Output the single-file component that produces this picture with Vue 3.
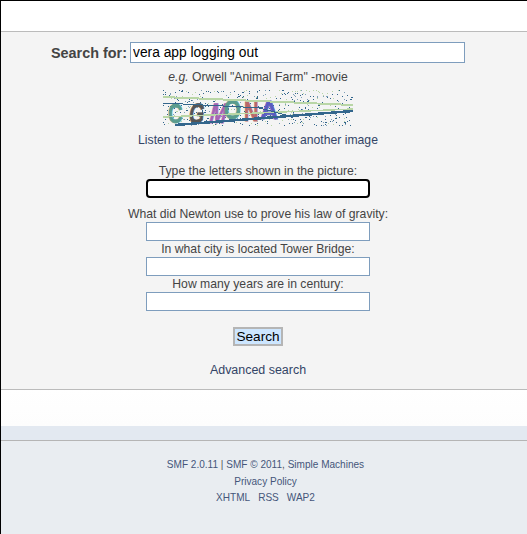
<template>
  <div class="page">
    <div class="top-bar"></div>

    <form class="search-panel" @submit.prevent>
      <div class="search-row">
        <label class="search-label" for="q">Search for:</label>
        <input id="q" v-model="query" class="field search-input" type="text" />
      </div>
      <p class="hint"><em>e.g.</em> Orwell "Animal Farm" -movie</p>

      <svg class="captcha" width="190" height="36" viewBox="0 0 190 36" role="img" aria-label="Visual verification">
        <rect v-for="d in dots" :key="d.id" :x="d.x" :y="d.y" width="1" height="1" :fill="d.fill" />
        <g class="captcha-text">
          <text
            v-for="l in captchaLetters"
            :key="l.id"
            :transform="l.transform"
            :fill="l.fill"
            :stroke="l.fill"
          >{{ l.char }}</text>
        </g>
        <line x1="0" y1="7" x2="190" y2="15" stroke="#b9d6a6" stroke-width="2" />
        <line x1="0" y1="27" x2="190" y2="19" stroke="#b9d6a6" stroke-width="1.5" />
        <line x1="0" y1="13" x2="100" y2="18" stroke="#33668c" stroke-width="1" />
        <line x1="92" y1="17" x2="131" y2="27" stroke="#33668c" stroke-width="1" />
        <line x1="12" y1="35" x2="190" y2="21" stroke="#33668c" stroke-width="2.5" />
      </svg>

      <p class="captcha-links"><a href="#">Listen to the letters</a> / <a href="#">Request another image</a></p>

      <div class="verify first">
        <label for="v0">Type the letters shown in the picture:</label>
        <input id="v0" ref="focusField" class="field plain" type="text" />
      </div>
      <div v-for="(q, i) in questions" :key="q" class="verify" :class="{ spaced: i === 0 }">
        <label>{{ q }}</label>
        <input class="field plain" type="text" />
      </div>

      <button class="search-btn" type="submit">Search</button>
      <a class="advanced" href="#">Advanced search</a>
    </form>

    <div class="gap"></div>
    <div class="band"></div>

    <footer class="footer">
      <p><a href="#">SMF 2.0.11</a> | <a href="#">SMF © 2011</a>, <a href="#">Simple Machines</a></p>
      <p><a href="#">Privacy Policy</a></p>
      <p class="formats"><a href="#">XHTML</a><a href="#">RSS</a><a href="#">WAP2</a></p>
    </footer>
  </div>
</template>

<script setup>
import { ref, onMounted } from 'vue';

const query = ref('vera app logging out');
const focusField = ref(null);

const questions = [
  'What did Newton use to prove his law of gravity:',
  'In what city is located Tower Bridge:',
  'How many years are in century:'
];

const captchaLetters = [
  { id: 0, char: 'C', fill: '#5a9c8e', transform: 'translate(5 33) scale(.72 1)' },
  { id: 1, char: 'G', fill: '#555555', transform: 'translate(25 33) skewX(-8) scale(.7 1)' },
  { id: 2, char: 'M', fill: '#a464b4', transform: 'translate(45 33) skewX(-14) scale(.72 1)' },
  { id: 3, char: 'O', fill: '#5a9c8e', transform: 'translate(61 29) scale(.77 1)' },
  { id: 4, char: 'N', fill: '#b8696a', transform: 'translate(81 31) scale(.72 1)' },
  { id: 5, char: 'A', fill: '#5a5cc0', transform: 'translate(97 29) scale(.9 .95)' }
];

// noise speckle over the verification image, fixed seed so it stays the same
let seed = 7;
const rand = () => {
  seed = (seed * 16807) % 2147483647;
  return seed / 2147483647;
};
const dots = Array.from({ length: 520 }, (_, id) => {
  const r = rand();
  return {
    id,
    x: Math.floor(rand() * 190),
    y: Math.floor(rand() * 36),
    fill: r < 0.62 ? '#33668c' : r < 0.85 ? '#b9d6a6' : '#7f9fb8'
  };
});

onMounted(() => {
  focusField.value.focus();
});
</script>

<style scoped>
.page {
  min-height: 534px;
  box-sizing: border-box;
  border-top: 1px solid #000;
  border-left: 1px solid #000;
  display: flex;
  flex-direction: column;
  font-family: "Liberation Sans", Arial, sans-serif;
  color: #444;
  font-size: 12.2px;
}

.top-bar {
  height: 30px;
  background: #fff;
}

.search-panel {
  background: #f4f4f4;
  border-top: 1px solid #bbb;
  border-bottom: 1px solid #bbb;
  padding: 10px 12px 11px 0;
  height: 359px;
  box-sizing: border-box;
  display: flex;
  flex-direction: column;
  align-items: center;
  text-align: center;
}

.search-row {
  display: flex;
  align-items: center;
  gap: 3px;
}

.search-label {
  font-size: 14.4px;
  font-weight: bold;
}

.field {
  box-sizing: border-box;
  background: #fff;
  border: 1px solid #7e9dbd;
  border-radius: 0;
  font-family: inherit;
  color: #000;
  padding: 0 2px;
  margin: 0;
}

.field:focus {
  outline: none;
  border: 2px solid #000;
  border-radius: 4px;
}

.search-input {
  width: 335px;
  height: 21px;
  font-size: 13.8px;
}

.plain {
  display: block;
  width: 224px;
  height: 19px;
  font-size: 12px;
}

.hint {
  margin: 6px 0 0;
  line-height: 16px;
}

.captcha {
  display: block;
  margin-top: 5px;
  overflow: visible;
  shape-rendering: crispEdges;
}

.captcha-text {
  font-family: "Liberation Sans", sans-serif;
  font-weight: bold;
  font-size: 28px;
  stroke-width: 0.8;
}

.captcha-links {
  margin: 6px 0 0;
  line-height: 16px;
}

.captcha-links a,
.advanced {
  color: #334466;
  text-decoration: none;
}

.verify {
  display: flex;
  flex-direction: column;
  align-items: center;
  line-height: 16px;
}

.verify.first {
  margin-top: 15px;
}

.verify.spaced {
  margin-top: 8px;
}

.search-btn {
  margin-top: 16px;
  box-sizing: border-box;
  width: 50px;
  height: 21px;
  padding: 0;
  background: #cde6ff;
  border: 2px solid #b5b5b5;
  font-family: inherit;
  font-size: 13.6px;
  color: #000;
}

.advanced {
  margin-top: 16px;
  line-height: 16px;
  font-size: 12.45px;
}

.gap {
  height: 36px;
  background: linear-gradient(#fff, #fdfdfd);
}

.band {
  height: 14px;
  background: #e3e9f1;
}

.footer {
  flex: 1;
  background: #e9edf1;
  border-top: 1px solid #b5b5b5;
  padding: 18px 0 0 3px;
  text-align: center;
  font-size: 10.05px;
  color: #555;
}

.footer p {
  margin: 0 0 4px;
  line-height: 12.5px;
}

.footer a {
  color: #45567a;
  text-decoration: none;
}

.formats a {
  margin: 0 4px;
}
</style>

<style>
html,
body {
  margin: 0;
  background: #fff;
}
</style>
